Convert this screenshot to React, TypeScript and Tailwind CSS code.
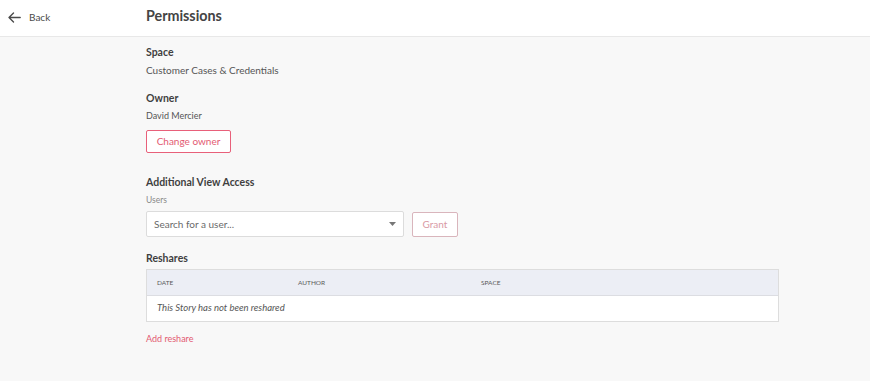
import React from 'react';

const font = { fontFamily: 'Lato, "Open Sans", sans-serif' };

export default function App() {
  return (
    <div className="w-[870px] h-[381px] bg-[#f8f8f8] text-[#4a4a4a] overflow-hidden" style={font}>
      {/* Header */}
      <div className="h-[37px] bg-white border-b border-[#e8e8e8] flex items-center pb-[3px]">
        <div className="w-[146px] flex items-center pl-[8px] gap-[8px] pt-[1px]">
          <svg width="13" height="11" viewBox="0 0 13 11" fill="none" stroke="#4a4a4a" strokeWidth="1.4" strokeLinecap="round" strokeLinejoin="round">
            <path d="M12.2 5.5H1M5.5 1L1 5.5L5.5 10" />
          </svg>
          <span className="text-[10px] text-[#4a4a4a]">Back</span>
        </div>
        <h1 className="text-[14.3px] font-bold text-[#444] leading-none">Permissions</h1>
      </div>

      <div className="pl-[146px] pt-[8px]">
        <div className="text-[10.5px] font-bold leading-[14px] text-[#3f3f3f]">Space</div>
        <div className="mt-[4px] text-[10px] leading-[14px] text-[#555]">Customer Cases &amp; Credentials</div>

        <div className="mt-[14px] text-[10.5px] font-bold leading-[14px] text-[#3f3f3f]">Owner</div>
        <div className="mt-[4px] text-[9px] leading-[14px] text-[#555]">David Mercier</div>
        <button className="mt-[7px] w-[85px] h-[23px] border border-[#e8607a] rounded-[2px] bg-white text-[10px] text-[#e35a72] flex items-center justify-center">
          Change owner
        </button>

        <div className="mt-[22px] text-[10.5px] font-bold leading-[14px] text-[#3f3f3f]">Additional View Access</div>
        <div className="mt-[5px] text-[8.5px] leading-[12px] text-[#8a8a8a]">Users</div>
        <div className="mt-[5px] flex items-center gap-[8px]">
          <div className="w-[258px] h-[26px] bg-white border border-[#dcdcdc] rounded-[2px] flex items-center justify-between pl-[7px] pr-[7px]">
            <span className="text-[10px] text-[#6a6a6a]">Search for a user...</span>
            <svg width="7" height="4" viewBox="0 0 7 4"><path d="M0 0h7L3.5 4z" fill="#777" /></svg>
          </div>
          <button className="w-[46px] h-[25px] border border-[#d9b5bc] rounded-[2px] bg-white text-[10px] text-[#d99aa5] flex items-center justify-center">
            Grant
          </button>
        </div>

        <div className="mt-[14px] text-[10.5px] font-bold leading-[14px] text-[#3f3f3f]">Reshares</div>
        <div className="mt-[4px] w-[633px] border border-[#dddddd] bg-white">
          <div className="h-[26px] bg-[#eceef5] border-b border-[#dcdde2] flex items-center text-[6.5px] text-[#5a5a5a] uppercase">
            <div className="w-[151px] pl-[10px]">Date</div>
            <div className="w-[183px]">Author</div>
            <div>Space</div>
          </div>
          <div className="h-[25px] flex items-center pl-[10px] text-[9.5px] italic text-[#555]">
            This Story has not been reshared
          </div>
        </div>
        <div className="mt-[11px] text-[9px] leading-[12px] text-[#e35a72]">Add reshare</div>
      </div>
    </div>
  );
}
